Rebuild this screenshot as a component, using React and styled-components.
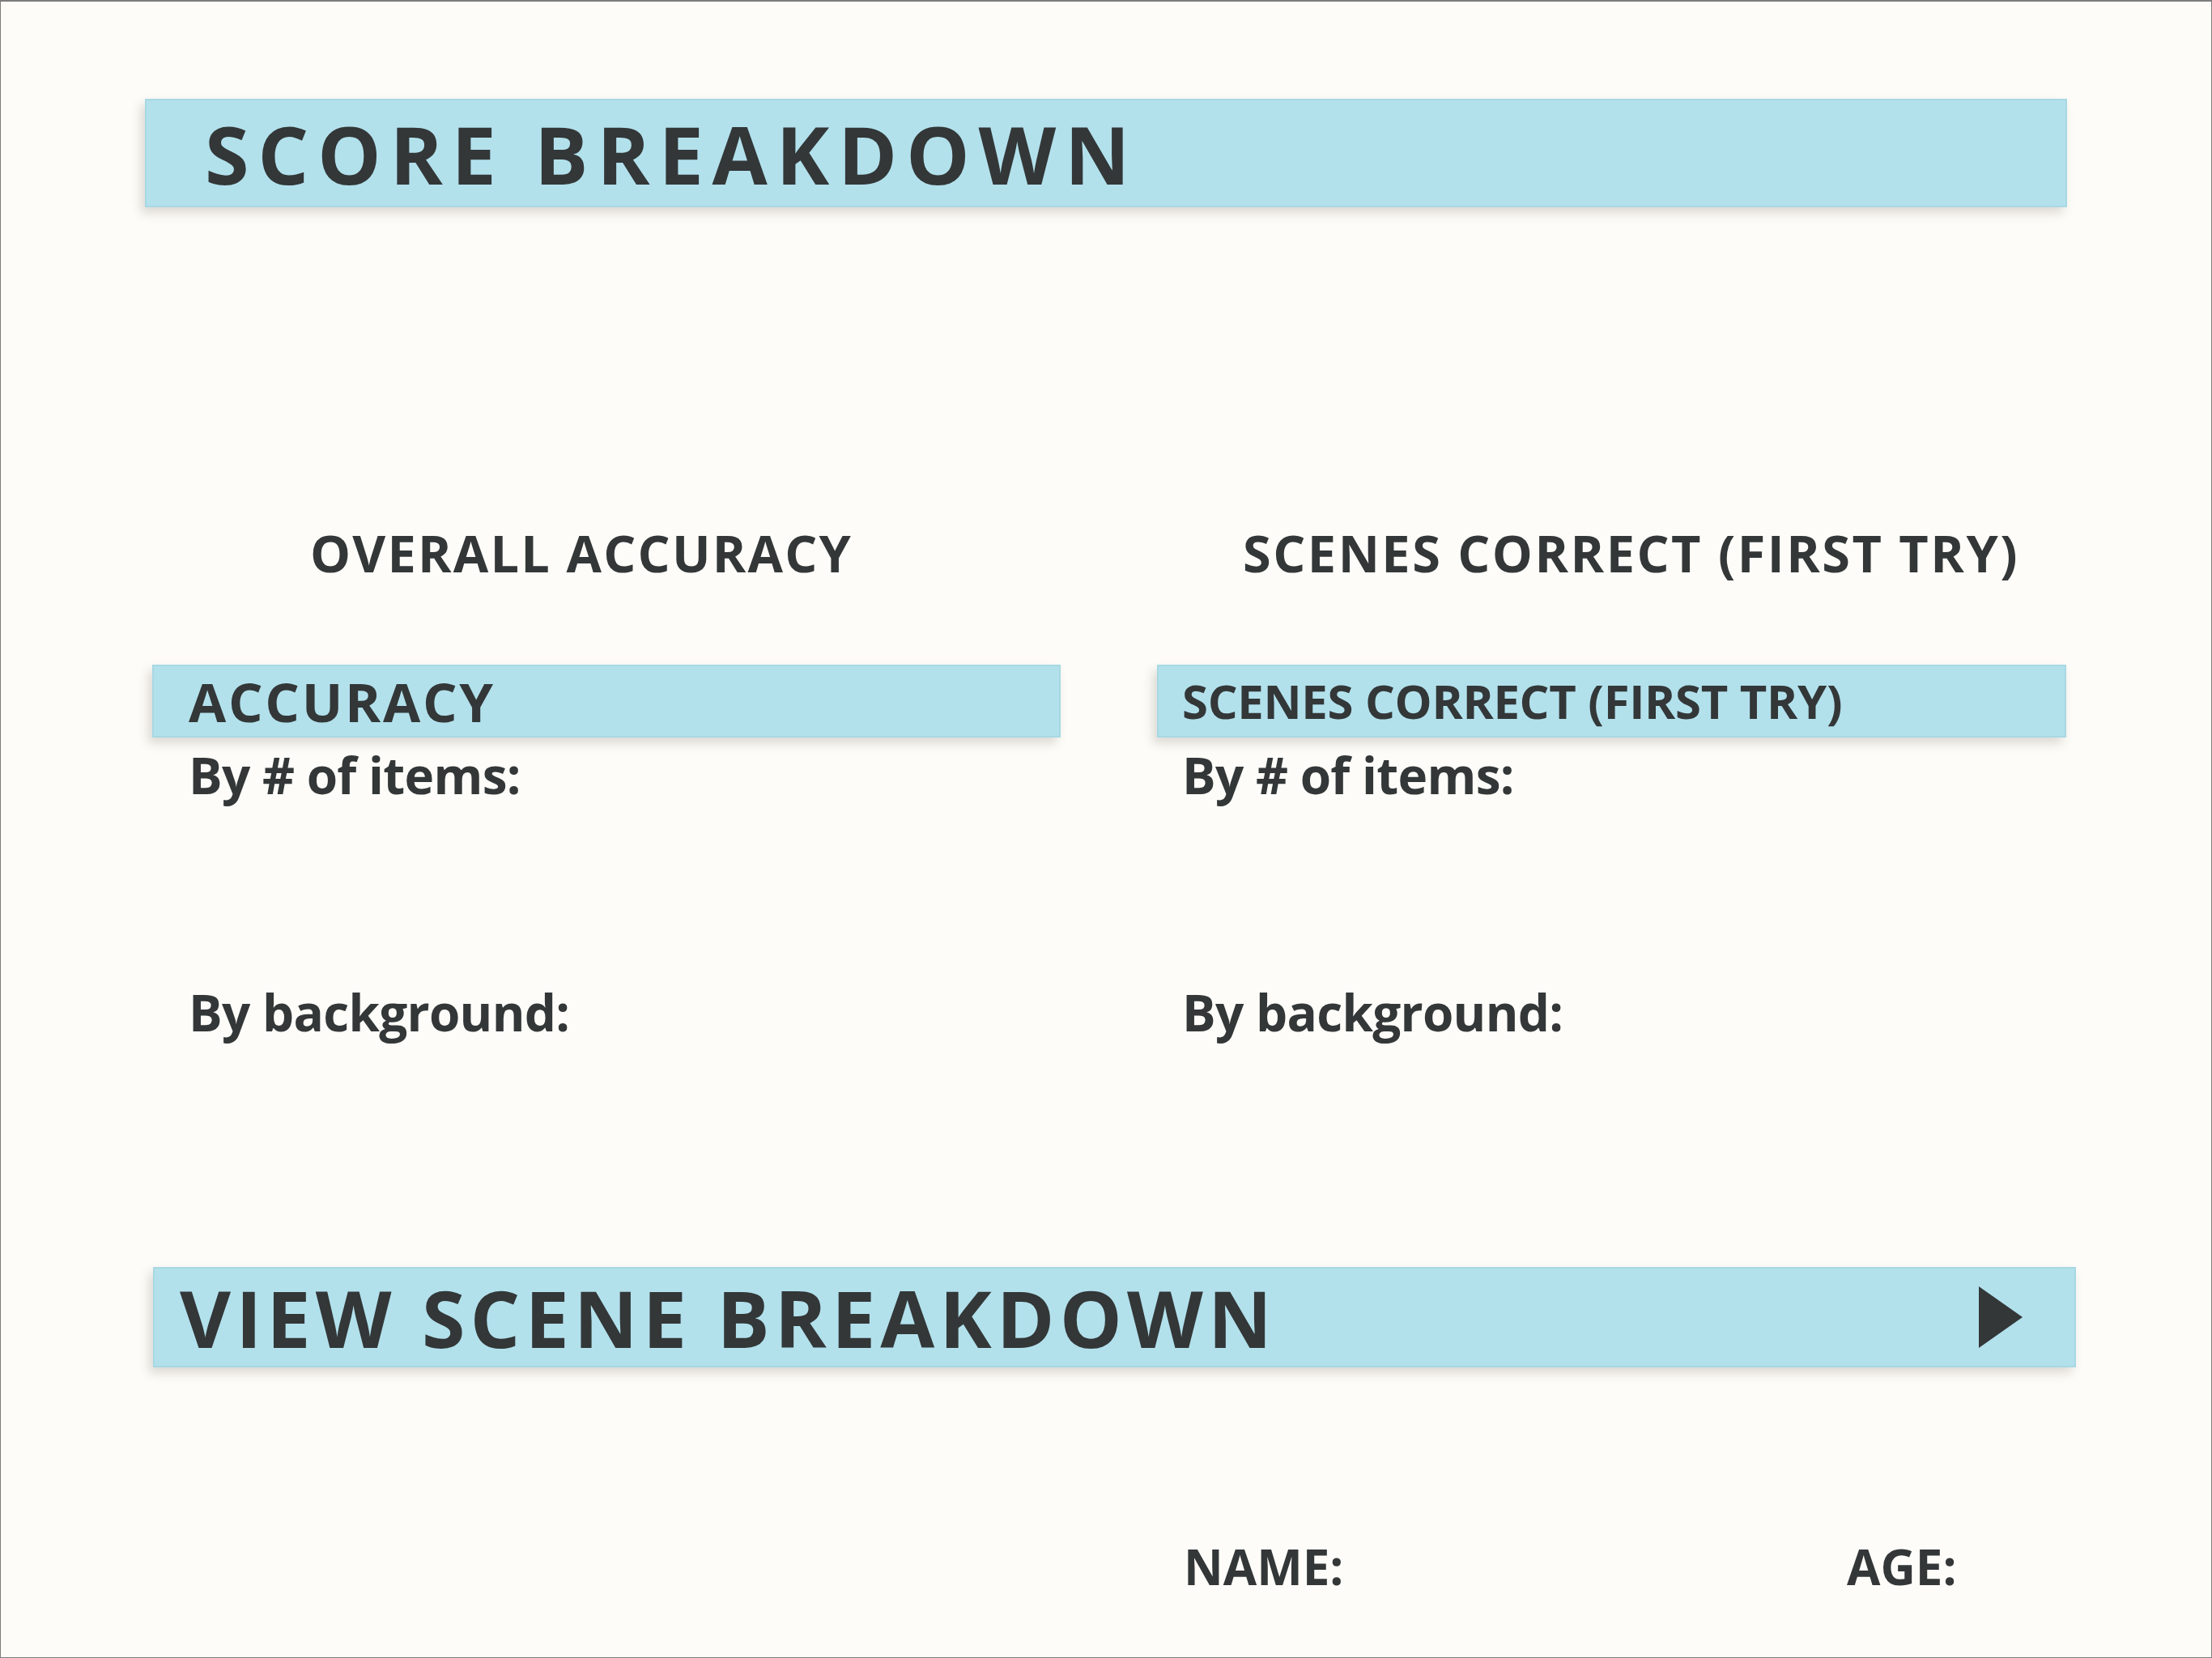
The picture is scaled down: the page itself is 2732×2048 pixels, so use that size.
import React from "react";
import styled, { createGlobalStyle } from "styled-components";

const GlobalStyle = createGlobalStyle`
  html, body {
    margin: 0;
    padding: 0;
    background: #fdfcf8;
  }
  * {
    box-sizing: border-box;
  }
`;

const Page = styled.div`
  width: 2732px;
  height: 2048px;
  background: #fdfcf8;
  border: 1px solid #7c7c7c;
  border-top-width: 2px;
  font-family: "Open Sans", "Liberation Sans", sans-serif;
  font-weight: 700;
  color: #333738;
  padding: 120px 0 0 178px;
  display: flex;
  flex-direction: column;
`;

const Bar = styled.div`
  display: flex;
  align-items: center;
  justify-content: space-between;
  background: #b2e1ec;
  border: 2px solid #a8d8e3;
  box-shadow: -5px 7px 12px rgba(60, 60, 50, 0.18);
  height: ${(p) => p.$height}px;
  width: ${(p) => p.$width}px;
  margin-left: ${(p) => p.$left || 0}px;
  margin-top: ${(p) => p.$top || 0}px;
  padding-left: ${(p) => p.$pad}px;
`;

const BarTitle = styled.h1`
  margin: 0;
  font-size: ${(p) => p.$size}px;
  line-height: 1;
  font-weight: 700;
  letter-spacing: ${(p) => p.$spacing || 0}px;
`;

const Columns = styled.div`
  display: grid;
  grid-template-columns: 1122px 1123px;
  column-gap: 119px;
  margin-left: 9px;
  margin-top: 395px;
`;

const Column = styled.section`
  display: flex;
  flex-direction: column;
`;

const Heading = styled.h2`
  margin: 0 0 107px;
  padding-left: ${(p) => p.$indent}px;
  font-size: 63px;
  line-height: 1;
  font-weight: 700;
  letter-spacing: ${(p) => p.$spacing}px;
`;

const Label = styled.p`
  margin: ${(p) => p.$top}px 0 0;
  padding-left: ${(p) => p.$indent}px;
  font-size: 62px;
  line-height: 1;
  font-weight: 700;
  letter-spacing: -0.7px;
`;

const Arrow = styled.svg`
  width: 54px;
  height: 76px;
  margin-right: 64px;
  flex-shrink: 0;
`;

const Footer = styled.div`
  display: flex;
  margin-top: 216px;
  margin-left: 1283px;
`;

const FooterLabel = styled.span`
  width: ${(p) => p.$width}px;
  font-size: 60px;
  line-height: 1;
  font-weight: 700;
`;

const App = () => {
  const columns = [
    {
      heading: "OVERALL ACCURACY",
      headIndent: 195,
      headSpacing: 2.2,
      bar: "ACCURACY",
      barSize: 67,
      barSpacing: 2.7,
      barPad: 43,
      indent: 45,
    },
    {
      heading: "SCENES CORRECT (FIRST TRY)",
      headIndent: 106,
      headSpacing: 2.5,
      bar: "SCENES CORRECT (FIRST TRY)",
      barSize: 58,
      barSpacing: -0.3,
      barPad: 29,
      indent: 31,
    },
  ];

  return (
    <>
      <GlobalStyle />
      <Page>
        <Bar $height={134} $width={2374} $pad={72}>
          <BarTitle $size={99} $spacing={10.7}>
            SCORE BREAKDOWN
          </BarTitle>
        </Bar>

        <Columns>
          {columns.map((col) => (
            <Column key={col.heading}>
              <Heading $indent={col.headIndent} $spacing={col.headSpacing}>
                {col.heading}
              </Heading>
              <Bar $height={90} $pad={col.barPad}>
                <BarTitle as="h3" $size={col.barSize} $spacing={col.barSpacing}>
                  {col.bar}
                </BarTitle>
              </Bar>
              <Label $top={15} $indent={col.indent}>
                By # of items:
              </Label>
              <Label $top={231} $indent={col.indent}>
                By background:
              </Label>
            </Column>
          ))}
        </Columns>

        <Bar $height={124} $width={2375} $left={10} $top={284} $pad={31}>
          <BarTitle as="h2" $size={97} $spacing={6.1}>
            VIEW SCENE BREAKDOWN
          </BarTitle>
          <Arrow viewBox="0 0 54 76">
            <polygon points="0,0 54,38 0,76" fill="#333738" />
          </Arrow>
        </Bar>

        <Footer>
          <FooterLabel $width={819}>NAME:</FooterLabel>
          <FooterLabel>AGE:</FooterLabel>
        </Footer>
      </Page>
    </>
  );
};

export default App;
